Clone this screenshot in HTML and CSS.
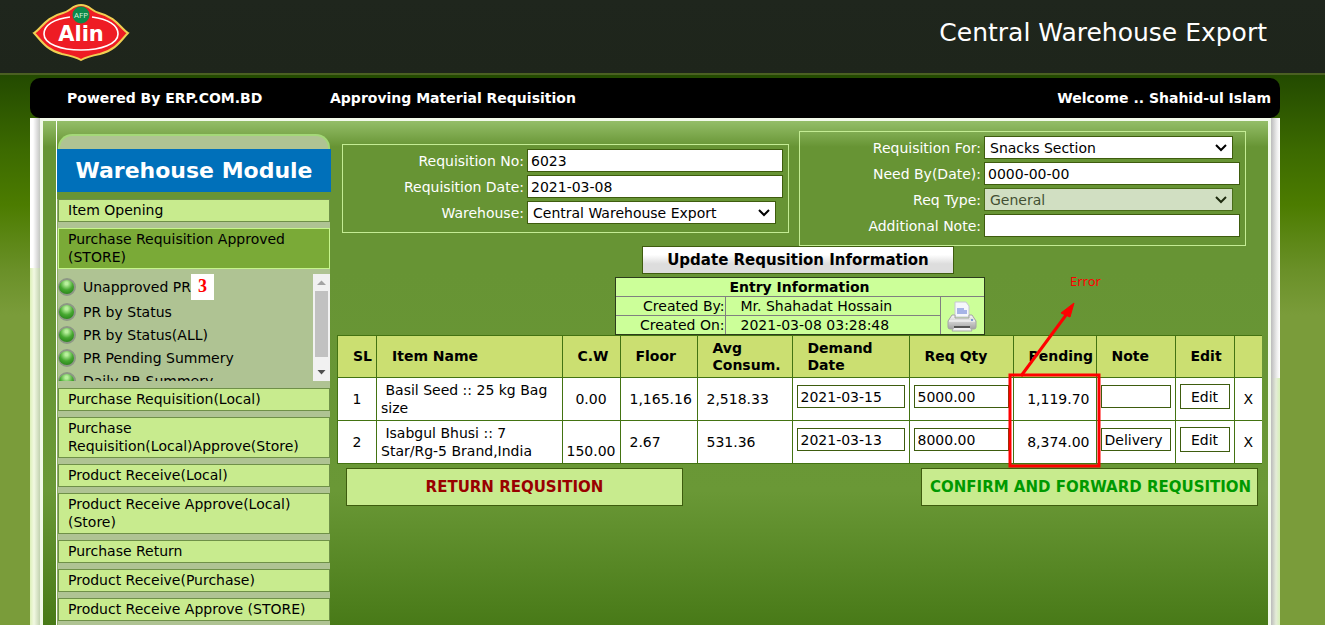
FILE: index.html
```html
<!DOCTYPE html>
<html lang="en">
<head>
<meta charset="utf-8">
<title>Central Warehouse Export</title>
<link rel="stylesheet" href="styles.css">
</head>
<body>
<header class="topbar">
  <svg class="logo" viewBox="0 0 98 60" role="img" aria-label="Alin">
    <path d="M2 30C9 26 14 14 31 10C39 8 40 2 49 2C58 2 59 8 67 10C84 14 89 26 96 30C89 37 84 47 68 51C58 53 54 54 49 57C44 54 40 53 30 51C14 47 9 37 2 30Z" fill="#ee1c24" stroke="#f0cf52" stroke-width="2"/>
    <path d="M38 14C22 16 12 22 12 31C12 41 29 47 49 47S86 41 86 31C86 22 76 16 60 14" fill="none" stroke="#fff" stroke-width="1.600"/>
    <circle cx="49" cy="12" r="8.500" fill="#0d8a4a"/>
    <text class="logo-small" x="49" y="15" text-anchor="middle">AFP</text>
    <text class="logo-name" x="49" y="38" text-anchor="middle">Alin</text>
  </svg>
  <h1 class="app-title">Central Warehouse Export</h1>
</header>

<div class="shell">
  <nav class="infobar">
    <span class="powered">Powered By ERP.COM.BD</span>
    <span class="page-name">Approving Material Requisition</span>
    <span class="welcome">Welcome .. Shahid-ul Islam</span>
  </nav>
  <div class="frame">
    <div class="panel">
      <aside class="sidebar">
        <div class="cap"></div>
        <h2 class="module">Warehouse Module</h2>
        <div class="menu">
          <a class="item" href="#">Item Opening</a>
          <a class="item open" href="#">Purchase Requisition Approved (STORE)</a>
          <div class="submenu">
            <ul class="links">
              <li><a href="#">Unapproved PR</a><span class="count">3</span></li>
              <li><a href="#">PR by Status</a></li>
              <li><a href="#">PR by Status(ALL)</a></li>
              <li><a href="#">PR Pending Summery</a></li>
              <li><a href="#">Daily PR Summery</a></li>
            </ul>
            <div class="scrollbar">
              <svg class="arrow" viewBox="0 0 17 17"><path d="M4 11L8.500 6.500L13 11Z" fill="#a3a3a3"/></svg>
              <div class="thumb"></div>
              <svg class="arrow" viewBox="0 0 17 17"><path d="M4.500 6L8.500 10.500L12.500 6Z" fill="#505050"/></svg>
            </div>
          </div>
          <a class="item" href="#">Purchase Requisition(Local)</a>
          <a class="item" href="#">Purchase Requisition(Local)Approve(Store)</a>
          <a class="item" href="#">Product Receive(Local)</a>
          <a class="item" href="#">Product Receive Approve(Local)(Store)</a>
          <a class="item" href="#">Purchase Return</a>
          <a class="item" href="#">Product Receive(Purchase)</a>
          <a class="item" href="#">Product Receive Approve (STORE)</a>
        </div>
      </aside>

      <main class="main">
        <form class="heads">
          <div class="box">
            <label for="no">Requisition No:</label><input id="no" value="6023">
            <label for="date">Requisition Date:</label><input id="date" value="2021-03-08">
            <label for="wh">Warehouse:</label><select id="wh"><option>Central Warehouse Export</option></select>
          </div>
          <div class="box">
            <label for="for">Requisition For:</label><select id="for"><option>Snacks Section</option></select>
            <label for="need">Need By(Date):</label><input id="need" value="0000-00-00">
            <label for="type">Req Type:</label><select id="type" disabled><option>General</option></select>
            <label for="note">Additional Note:</label><input id="note">
          </div>
        </form>
        <button class="update" type="button">Update Requsition Information</button>

        <table class="entry">
          <tr><th colspan="3">Entry Information</th></tr>
          <tr><td class="key">Created By:</td><td class="val">Mr. Shahadat Hossain</td>
            <td class="print" rowspan="2">
              <svg viewBox="0 0 32 32" role="img" aria-label="Print">
                <defs><linearGradient id="pg" x1="0" y1="0" x2="0" y2="1"><stop offset="0" stop-color="#fafafa"/><stop offset="1" stop-color="#a2a2a2"/></linearGradient></defs>
                <path d="M9 2H20L23 6V17H9Z" fill="#f6f7fb" stroke="#c6c8d2"/>
                <path d="M11 8H18V10H21V14H11Z" fill="#a6b4e6"/>
                <path d="M6 15H9V18H23V15H26L30 21V27Q30 29 28 29H4Q2 29 2 27V21Z" fill="url(#pg)" stroke="#a4a4a4"/>
                <path d="M3 21H29" stroke="#fff"/>
                <path d="M8 27H24L26 31H6Z" fill="#f0f0f0" stroke="#aaa"/>
                <path d="M8 27H24" stroke="#555" stroke-width="2"/>
                <circle cx="26" cy="20" r="1" fill="#5880c8"/>
              </svg>
            </td></tr>
          <tr><td class="key">Created On:</td><td class="val">2021-03-08 03:28:48</td></tr>
        </table>

        <div class="lines">
          <table class="grid">
            <colgroup><col class="c-sl"><col><col class="c-cw"><col class="c-floor"><col class="c-avg"><col class="c-date"><col class="c-qty"><col class="c-pend"><col class="c-note"><col class="c-edit"><col class="c-x"></colgroup>
            <thead>
              <tr><th>SL</th><th>Item Name</th><th>C.W</th><th>Floor</th><th>Avg Consum.</th><th>Demand Date</th><th>Req Qty</th><th>Pending</th><th>Note</th><th>Edit</th><th></th></tr>
            </thead>
            <tbody>
              <tr>
                <td class="mid">1</td><td class="name">&nbsp;Basil Seed :: 25 kg Bag size</td><td class="mid">0.00</td><td class="num">1,165.16</td><td class="num">2,518.33</td>
                <td class="ctl"><input aria-label="Demand date 1" value="2021-03-15"></td>
                <td class="ctl"><input aria-label="Quantity 1" value="5000.00"></td>
                <td class="pend">1,119.70</td>
                <td class="ctl"><input aria-label="Note 1"></td>
                <td class="ctl"><button type="button">Edit</button></td>
                <td class="mid">X</td>
              </tr>
              <tr>
                <td class="mid">2</td><td class="name">&nbsp;Isabgul Bhusi :: 7 Star/Rg-5 Brand,India</td><td class="mid low">150.00</td><td class="num">2.67</td><td class="num">531.36</td>
                <td class="ctl"><input aria-label="Demand date 2" value="2021-03-13"></td>
                <td class="ctl"><input aria-label="Quantity 2" value="8000.00"></td>
                <td class="pend">8,374.00</td>
                <td class="ctl"><input aria-label="Note 2" value="Delivery"></td>
                <td class="ctl"><button type="button">Edit</button></td>
                <td class="mid">X</td>
              </tr>
            </tbody>
          </table>
          <svg class="callout" viewBox="0 0 100 200">
            <rect x="5" y="107" width="89" height="91" fill="none" stroke="#f00" stroke-width="3"/>
            <path d="M16 108L64 43" stroke="#f00" stroke-width="3"/>
            <path d="M69 35L56 45L65 49Z" fill="#f00" stroke="#f00"/>
            <text x="65" y="18">Error</text>
          </svg>
        </div>
        <div class="actions">
          <button class="return" type="button">RETURN REQUSITION</button>
          <button class="confirm" type="button">CONFIRM AND FORWARD REQUSITION</button>
        </div>
      </main>
    </div>
  </div>
</div>
</body>
</html>
```
FILE: styles.css
```css
* { box-sizing: border-box; }
html { height: 100%; overflow: hidden; }
body {
  margin: 0;
  height: 100%;
  overflow: hidden;
  display: flex;
  flex-direction: column;
  font: 14px/18px Verdana, "DejaVu Sans", sans-serif;
  color: #000;
  background: linear-gradient(#234a00 75px, #3c6a00 150px, #4c7c00 205px, #6a9028 270px, #7a9c3a 315px);
}
input, select, button { font: inherit; color: inherit; }
a { color: inherit; text-decoration: none; }

.topbar {
  flex: none;
  height: 75px;
  display: flex;
  justify-content: space-between;
  padding: 3px 58px 0 32px;
  background: linear-gradient(#1f261d, #1e251b);
  border-bottom: 2px solid #4b6022;
}
.logo { width: 98px; height: 60px; }
.logo-small { font: 8px "Open Sans", sans-serif; fill: #d8f0dc; }
.logo-name { font: bold 21px "DejaVu Sans", sans-serif; fill: #fff; }
.app-title { margin: 0; font-weight: normal; font-size: 25px; line-height: 60px; color: #fff; }

.shell { flex: 1; min-height: 0; margin: 3px 45px 0 30px; display: flex; flex-direction: column; }
.infobar {
  flex: none;
  height: 40px;
  display: flex;
  align-items: center;
  padding: 0 9px 0 37px;
  border-radius: 10px;
  background: #000;
  color: #fff;
  font-weight: bold;
}
.powered { width: 263px; }
.page-name { flex: 1; }

.frame {
  flex: 1;
  min-height: 0;
  display: flex;
  padding: 0 9px 0 10px;
  background:
    linear-gradient(90deg, #fff 3px, #ddd 7px, #c4c8c2 10px) left top / 10px 150px no-repeat,
    linear-gradient(90deg, #ddf0b8, #f2f9e2 4px, #c2d2b0 10px) left top / 10px 100% no-repeat,
    linear-gradient(270deg, #fff, #eee 3px, #bbb 9px) right top / 9px 260px no-repeat,
    linear-gradient(270deg, #d8f0b8, #e4ecd8 4px, #bbb 9px) right top / 9px 100% no-repeat;
}
.panel {
  flex: 1;
  min-width: 0;
  display: flex;
  border: 3px solid #f2faea;
  border-bottom: 0;
  padding: 0 6px 0 13px;
  background:
    linear-gradient(#94be68, transparent 26px),
    linear-gradient(#679434 150px, #6a9836 370px, #447614 520px);
}

.sidebar {
  flex: none;
  display: flex;
  flex-direction: column;
  width: 275px;
  border-left: 1px solid #fff;
  padding-top: 13px;
}
.cap {
  flex: none;
  height: 15px;
  margin: 0 1px;
  border: 2px solid #a4d878;
  border-bottom: 0;
  border-radius: 14px 14px 0 0;
  background: #afc393;
}
.module {
  margin: 0 0 7px;
  padding-top: 1px;
  background: #0070ba;
  color: #fff;
  text-align: center;
  font-size: 22px;
  line-height: 42px;
}
.menu {
  flex: 1;
  margin-right: 1px;
  background: #afc393;
  border-left: 1px solid #8fae68;
}
.item {
  display: block;
  margin-bottom: 6px;
  padding: 1px 10px 2px 9px;
  border: 1px solid #6f9048;
  background: #c8eb8e;
}
.item.open { background: #7aaa37; border-color: #c6f58c; margin-bottom: 5px; }
.submenu { display: flex; height: 107px; margin-bottom: 7px; overflow: hidden; }
.links { flex: 1; margin: 0; padding: 0; list-style: none; }
.links li { display: flex; align-items: center; height: 23px; }
.links li:first-child { height: 26px; }
.links li::before {
  content: "";
  width: 15px;
  height: 14px;
  margin-right: 7px;
  border: 2px solid #8d9785;
  border-left-width: 1px;
  border-radius: 50%;
  background: radial-gradient(circle at 50% 25%, #b8f09c 10%, #46a830 50%, #1d7412);
}
.count {
  width: 23px;
  height: 26px;
  background: #fff;
  color: #f00;
  text-align: center;
  font: bold 18px/24px "Liberation Serif", serif;
}
.scrollbar { width: 17px; background: #f1f1f1; display: flex; flex-direction: column; }
.arrow { width: 17px; height: 17px; }
.thumb { height: 66px; margin: 0 2px 7px; background: #c1c1c1; }

.main { flex: 1; min-width: 0; padding: 10px 0 0 6px; display: flex; flex-direction: column; }
.heads { display: flex; align-items: center; gap: 10px; padding: 0 16px 0 5px; }
.box {
  flex: 1;
  display: grid;
  grid-template-columns: 181px 1fr;
  column-gap: 3px;
  row-gap: 3px;
  align-items: center;
  padding: 4px 5px 8px 0;
  border: 1px solid #c4ec94;
}
.box label { color: #fff; text-align: right; }
.box input, .box select {
  width: 100%;
  height: 23px;
  padding: 0 3px;
  border: 1px solid #3e5c0e;
  border-radius: 0;
  background: #fff;
}
.box select {
  appearance: none;
  width: calc(100% - 7px);
  padding: 0 20px 0 5px;
  background: #fff url("data:image/svg+xml,%3Csvg xmlns='http://www.w3.org/2000/svg' width='12' height='8'%3E%3Cpath d='M1 1L6 6L11 1' fill='none' stroke='%23000' stroke-width='2'/%3E%3C/svg%3E") right 5px center no-repeat;
}
.box select:disabled { opacity: .7; color: #333; }
.update {
  align-self: center;
  width: 312px;
  height: 28px;
  margin-right: 3px;
  padding: 0;
  border: 1px solid #3e5c0e;
  background: linear-gradient(#fff 30%, #ddd 65%);
  font-weight: bold;
  font-size: 15px;
}
.entry {
  align-self: center;
  width: 370px;
  margin-top: 3px;
  border-collapse: collapse;
  border: 2px solid #2c3c1c;
  border-width: 1px;
  outline: 1px solid #2c3c1c;
  outline-offset: -1px;
  background: #ccff99;
}
.entry th, .entry td { height: 19px; padding: 0; border: 1px solid #808080; line-height: 17px; }
.entry .key { width: 110px; text-align: right; }
.entry .val { padding-left: 15px; }
.entry .print { width: 44px; text-align: center; }
.print svg { display: block; width: 32px; height: 32px; margin: auto; }

.lines { position: relative; }
.grid { width: 100%; table-layout: fixed; border-collapse: collapse; background: #fff; }
.grid th, .grid td { border: 1px solid #437312; }
.grid tr > :last-child { border-right: 0; }
.grid th { height: 42px; padding: 0 0 0 15px; text-align: left; line-height: 17px; background: #cbdf71; }
.grid td { height: 43px; padding: 0 4px; }
.c-sl { width: 39px; }
.c-cw { width: 58px; }
.c-floor { width: 77px; }
.c-avg { width: 95px; }
.c-date { width: 117px; }
.c-qty { width: 104px; }
.c-pend { width: 83px; }
.c-note { width: 79px; }
.c-edit { width: 59px; }
.c-x { width: 28px; }
.grid .mid { text-align: center; }
.grid .low { vertical-align: bottom; padding: 0 0 3px; }
.grid .num { padding-left: 9px; padding-right: 0; }
.grid .pend { text-align: right; padding-right: 6px; }
.grid .ctl { padding-bottom: 5px; }
.ctl input, .ctl button {
  display: block;
  width: 100%;
  height: 23px;
  padding: 0 3px;
  border: 1px solid #3e5c0e;
  background: #fff;
}
.ctl button { height: 25px; }
.callout { position: absolute; right: 157px; bottom: -4px; width: 100px; height: 200px; }
.callout text { font: 13px "Noto Sans", sans-serif; fill: #f00; }

.actions { display: flex; justify-content: space-between; padding: 4px 4px 0 9px; }
.actions button {
  width: 337px;
  height: 38px;
  padding: 0 8px;
  overflow: hidden;
  white-space: nowrap;
  border: 1px solid #3e5c0e;
  background: #c8eb8e;
  font-weight: bold;
  font-size: 15px;
}
.actions .return { color: #900; }
.actions .confirm { color: #090; text-align: left; }
```
